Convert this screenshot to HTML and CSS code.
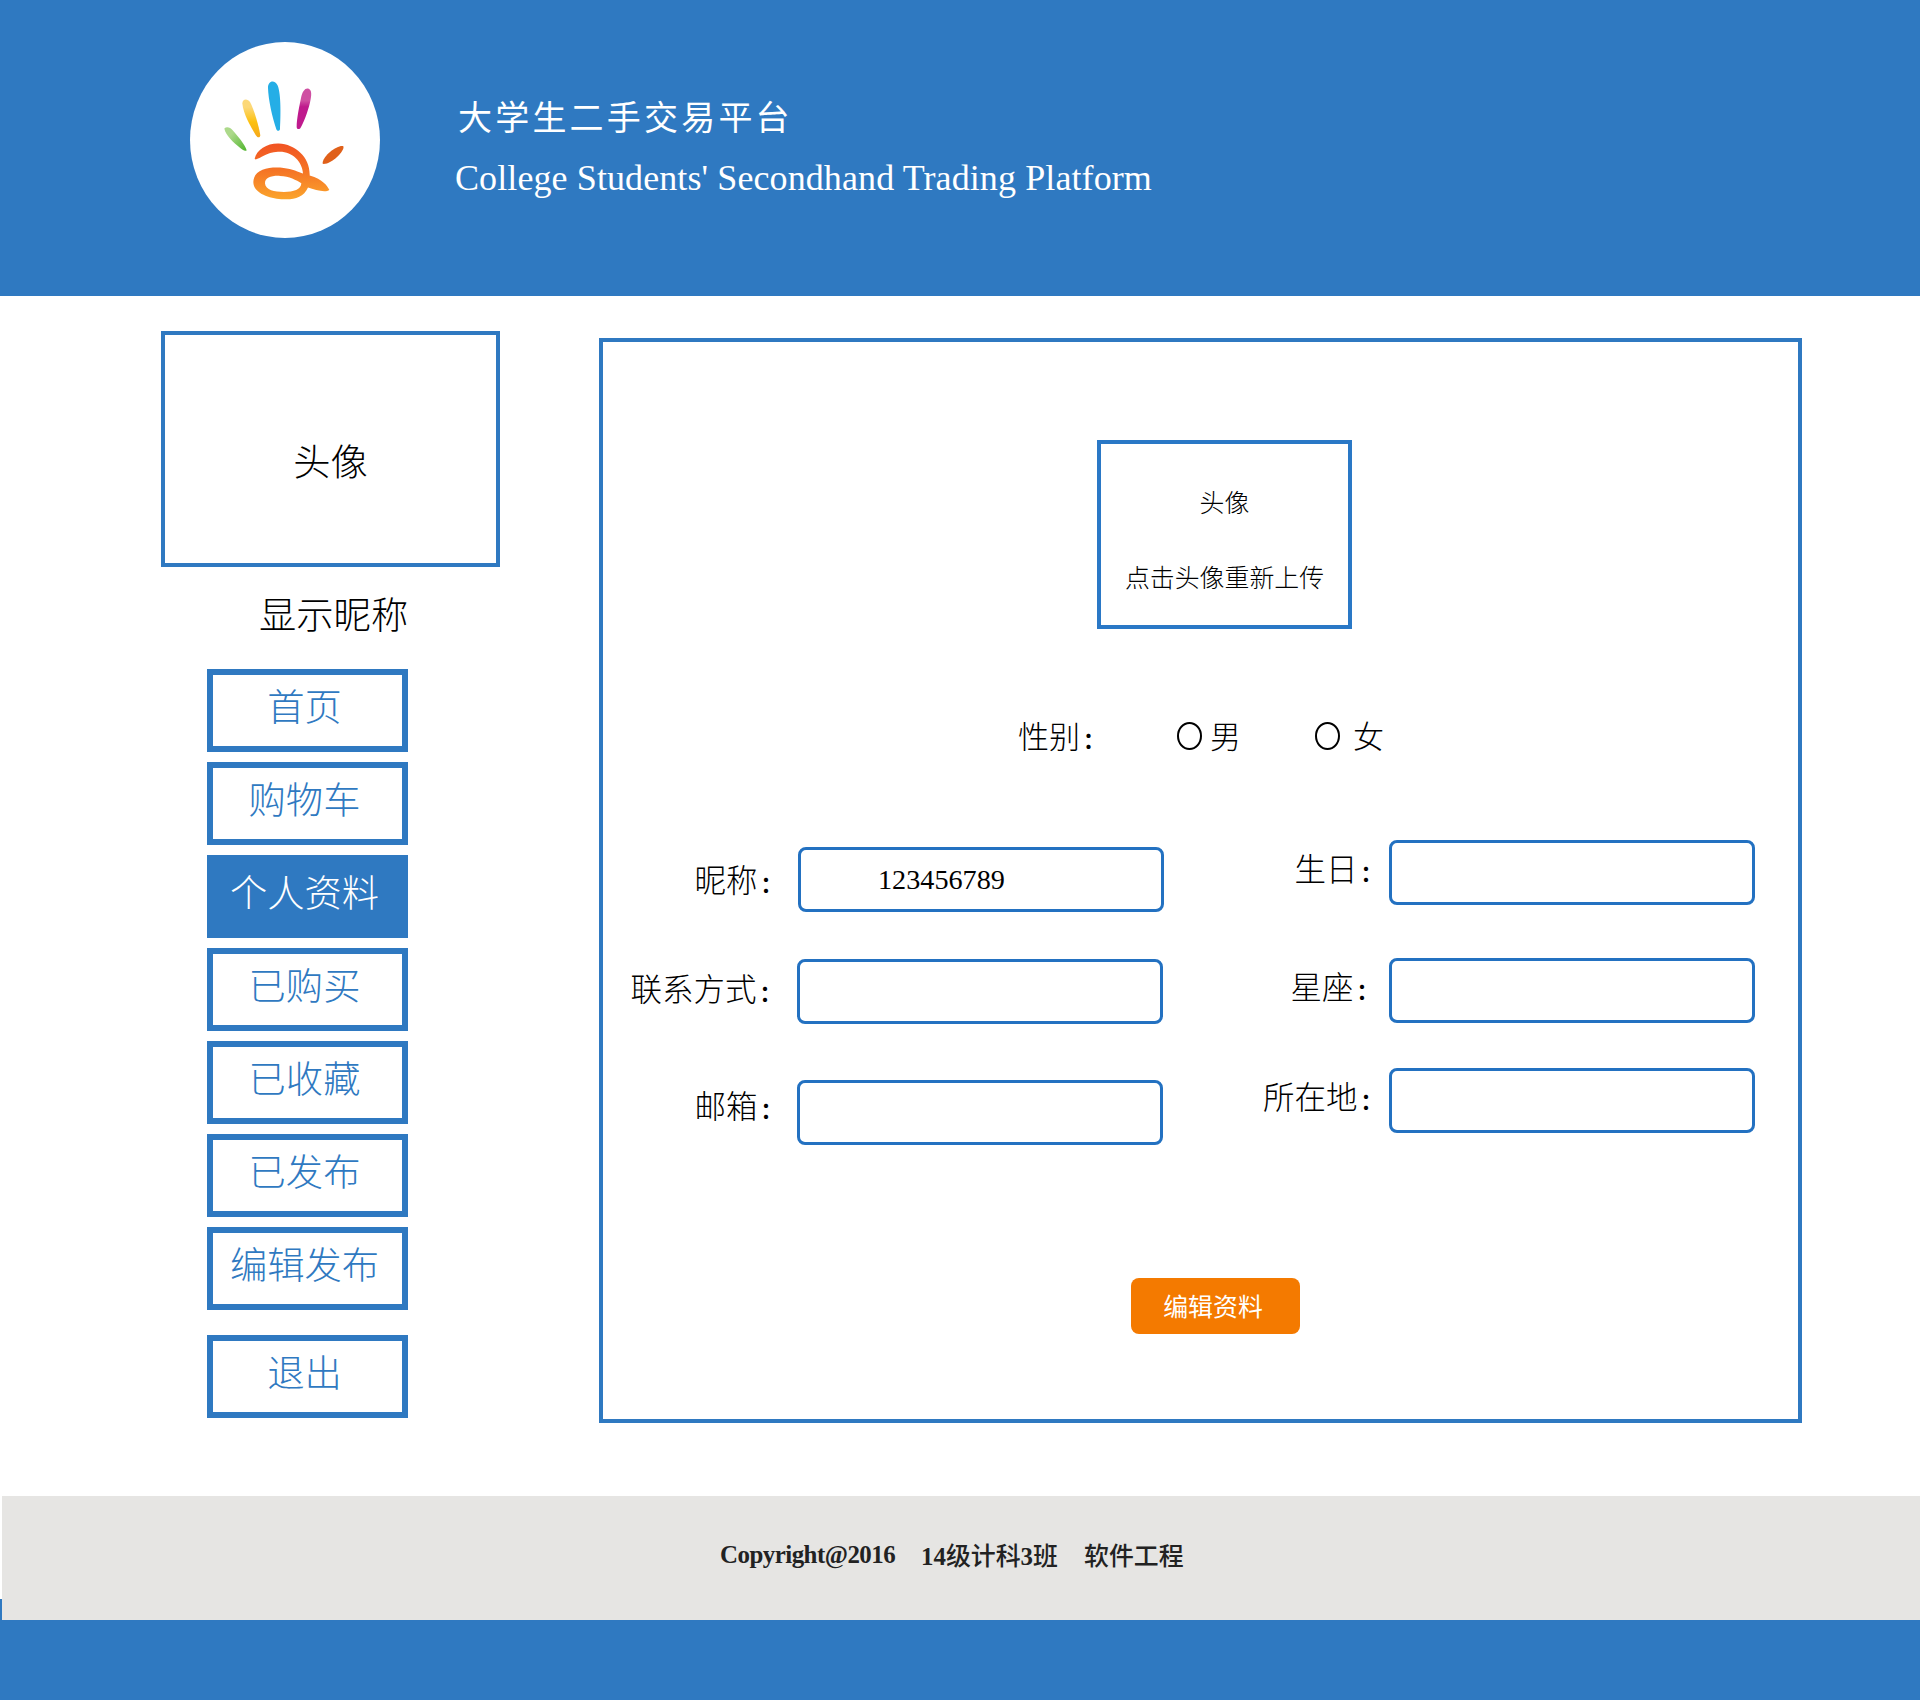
FILE: index.html
```
<!DOCTYPE html>
<html lang="zh-CN">
<head>
<meta charset="utf-8">
<title>大学生二手交易平台</title>
<link rel="stylesheet" href="styles.css">
</head>
<body>
<header class="header">
  <svg class="logo" viewBox="60 38 570 587" preserveAspectRatio="none" aria-hidden="true">
    <defs>
      <linearGradient id="green" x1="0" y1="0" x2="1" y2="1"><stop offset=".3" stop-color="#acd98a"/><stop offset="1" stop-color="#4fb52c"/></linearGradient>
      <linearGradient id="yellow" x1="0" y1="0" x2="0" y2="1"><stop offset=".2" stop-color="#fcd877"/><stop offset=".6" stop-color="#fcc00e"/><stop offset="1" stop-color="#f5a81c"/></linearGradient>
      <linearGradient id="pink" x1="0" y1="0" x2="0" y2="1"><stop offset=".3" stop-color="#cf4fa2"/><stop offset=".45" stop-color="#bf1a8d"/></linearGradient>
      <linearGradient id="palm" gradientUnits="userSpaceOnUse" x1="0" y1="340" x2="0" y2="510"><stop offset="0" stop-color="#f15223"/><stop offset=".5" stop-color="#f57525"/><stop offset="1" stop-color="#fba52c"/></linearGradient>
    </defs>
    <ellipse cx="345" cy="331.500" rx="285" ry="293.500" fill="#fff"/>
    <path d="M163 297C170 290 181 294 188 302C203 319 224 343 230 362C226 367 217 361 209 354C191 339 167 318 163 297Z" fill="url(#green)"/>
    <path d="M217 222C217 208 233 207 240 218C252 239 267 291 271 318C269 326 263 325 258 318C242 292 220 253 217 222Z" fill="url(#yellow)"/>
    <path d="M294 176C293 154 314 149 323 168C334 195 332 264 330 299C327 306 322 305 319 299C307 266 295 210 294 176Z" fill="#25aee6"/>
    <path d="M393 206C397 184 407 174 416 178C426 182 425 198 420 219C413 248 401 280 391 296C386 301 381 299 380 293C380 269 388 230 393 206Z" fill="url(#pink)"/>
    <path d="M458 399C461 378 501 346 520 350C526 363 483 406 458 403Z" fill="#e0601a"/>
    <g fill="url(#palm)" fill-rule="evenodd">
      <path d="M254 388C260 360 292 341 326 342C377 344 421 384 419 438C459 450 472 469 478 481C467 490 436 482 414 474C401 504 371 511 341 509C300 508 250 492 250 457C252 417 300 411 341 415C366 418 387 427 399 432C397 395 365 364 324 367C288 369 272 387 257 390ZM394 461C379 451 358 440 330 439C303 438 284 444 285 462C287 482 313 487 342 487C371 487 393 480 394 461Z"/>
    </g>
  </svg>
  <div class="titles">
    <h1 class="title">大学生二手交易平台</h1>
    <p class="subtitle">College Students' Secondhand Trading Platform</p>
  </div>
</header>

<main class="main">
  <aside class="side">
    <div class="avatar">头像</div>
    <p class="nickname">显示昵称</p>
    <nav class="menu">
      <a class="item">首页</a>
      <a class="item">购物车</a>
      <a class="item active">个人资料</a>
      <a class="item">已购买</a>
      <a class="item">已收藏</a>
      <a class="item">已发布</a>
      <a class="item">编辑发布</a>
      <a class="item exit">退出</a>
    </nav>
  </aside>

  <section class="panel">
    <div class="upload"><span>头像</span><span>点击头像重新上传</span></div>
    <div class="gender">
      <span class="gender-label">性别<span class="colon">：</span></span>
      <span class="radio"></span><span class="male">男</span>
      <span class="radio"></span><span class="female">女</span>
    </div>
    <div class="fields">
      <div class="column left">
        <div class="field nick"><label>昵称<span class="colon">：</span></label><div class="input">123456789</div></div>
        <div class="field phone"><label>联系方式<span class="colon">：</span></label><div class="input"></div></div>
        <div class="field mail"><label>邮箱<span class="colon">：</span></label><div class="input"></div></div>
      </div>
      <div class="column right">
        <div class="field birthday"><label>生日<span class="colon">：</span></label><div class="input"></div></div>
        <div class="field star"><label>星座<span class="colon">：</span></label><div class="input"></div></div>
        <div class="field place"><label>所在地<span class="colon">：</span></label><div class="input"></div></div>
      </div>
    </div>
    <div class="submit">编辑资料</div>
  </section>
</main>

<footer class="footer">
  <div class="copyright"><span class="latin">Copyright@2016</span><span class="class-name"><b>14</b>级计科<b>3</b>班</span><span>软件工程</span></div>
</footer>
</body>
</html>
```
FILE: styles.css
```
* { box-sizing: border-box; }
body {
  margin: 0;
  width: 1920px;
  height: 1700px;
  display: flex;
  flex-direction: column;
  overflow: hidden;
  background: #fff;
  color: #000;
  font-family: "Noto Sans CJK SC", sans-serif;
  font-weight: 300;
}
h1, p { margin: 0; font-weight: 300; }

.header {
  height: 296px;
  flex: none;
  display: flex;
  padding-left: 190px;
  background: #2f79c1;
  color: #fff;
}
.logo { width: 190px; height: 196px; margin-top: 42px; flex: none; }
.titles { margin-left: 75px; padding-top: 92px; }
.title { margin-left: 3px; font-size: 34px; font-weight: 400; line-height: 48px; letter-spacing: 3.2px; white-space: nowrap; }
.subtitle {
  margin-top: 14px;
  font: 36px/48px "Liberation Serif", serif;
  letter-spacing: .1px;
  white-space: nowrap;
}

.main { display: flex; height: 1200px; flex: none; padding-left: 161px; }
.side { width: 438px; padding-top: 35px; flex: none; }
.avatar {
  width: 339px;
  height: 236px;
  border: 4px solid #2f79c1;
  padding-top: 100px;
  text-align: center;
  font-size: 37.3px;
  line-height: 50px;
}
.nickname { margin: 21px 0 0 98px; font-size: 37.3px; line-height: 50px; }
.menu { margin: 31px 0 0 46px; width: 201px; display: flex; flex-direction: column; gap: 10px; }
.item {
  height: 83px;
  border: 6px solid #2f79c1;
  padding: 3px 6px 0 0;
  text-align: center;
  white-space: nowrap;
  color: #2f79c1;
  font-size: 37.3px;
  line-height: 54px;
}
.active { background: #2f79c1; color: #fff; }
.exit { margin-top: 15px; }

.panel {
  margin-top: 42px;
  width: 1203px;
  height: 1085px;
  border: 4px solid #2f79c1;
  display: flex;
  flex-direction: column;
}
.upload {
  margin: 98px 0 0 494px;
  width: 255px;
  height: 189px;
  border: 4px solid #2a78c6;
  padding-top: 37px;
  display: flex;
  flex-direction: column;
  align-items: center;
  gap: 35px;
  font-size: 24.9px;
  line-height: 40px;
}
.gender {
  margin: 84px 0 0 415px;
  height: 44px;
  display: flex;
  align-items: center;
  font-size: 31px;
  line-height: 44px;
}
.gender-label { width: 159px; }
.radio { width: 25px; height: 28px; margin-top: 2px; border: 2px solid #000; border-radius: 50%; }
.male { margin-left: 8px; width: 105px; }
.female { margin-left: 13px; }
.colon {
  display: inline-block;
  width: 31.5px;
  padding-left: 3px;
  font-size: 22px;
  font-weight: 700;
  line-height: 1;
}

.fields { margin-top: 83px; height: 306px; display: flex; }
.left { width: 561px; padding-top: 7px; flex: none; }
.right { width: 591px; }
.field { display: flex; justify-content: flex-end; align-items: flex-start; }
.field label { font-size: 31.5px; line-height: 40px; white-space: nowrap; }
.input {
  width: 366px;
  height: 65px;
  flex: none;
  border: 3px solid #2371c1;
  border-radius: 8px;
  font: 28.2px/59px "Liberation Serif", serif;
  padding-left: 77px;
}
.nick label { margin: 11px 9px 0 0; }
.phone { margin: 47px 1px 0 0; }
.phone label { margin: 8px 9px 0 0; }
.mail { margin: 56px 1px 0 0; }
.mail label { margin: 4px 8px 0 0; }
.birthday label { margin: 7px 0 0; }
.star { margin-top: 53px; }
.star label { margin: 7px 4px 0 0; }
.place { margin-top: 45px; }
.place label { margin: 7px 0 0; }

.submit {
  margin: 132px 0 0 528px;
  width: 169px;
  height: 56px;
  border-radius: 8px;
  background: #f47a00;
  color: #fff;
  padding: 6px 5px 0 0;
  text-align: center;
  font-size: 24.9px;
  font-weight: 400;
  line-height: 42px;
}

.footer {
  flex: 1;
  background: linear-gradient(#fff 103px, #2f79c1 103px);
  padding-left: 2px;
}
.copyright {
  height: 124px;
  background: #e6e5e3;
  color: #222;
  display: flex;
  align-items: flex-start;
  padding: 37px 0 0 718px;
  font-size: 24.9px;
  font-weight: 500;
  line-height: 42px;
  white-space: pre;
}
.copyright b, .latin { font-family: "Liberation Serif", serif; font-weight: 700; }
.latin { width: 201px; letter-spacing: -.5px; padding-top: 1px; }
.class-name { width: 163px; }
```
